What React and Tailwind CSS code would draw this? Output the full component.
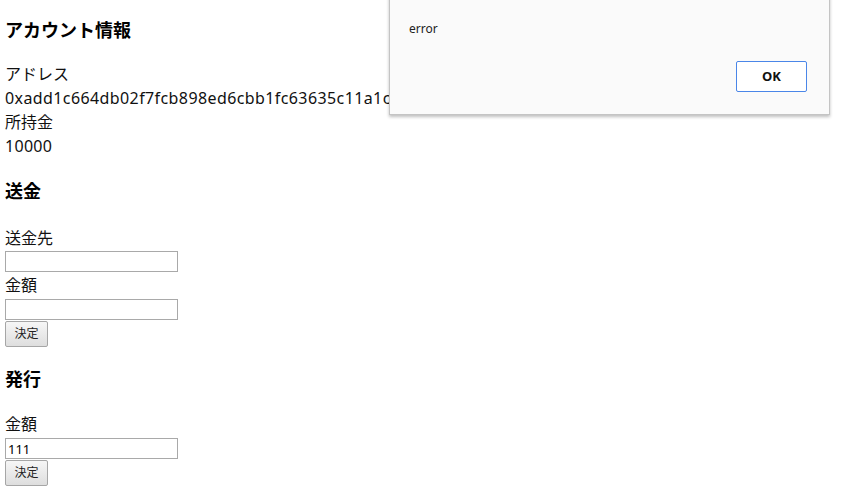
import React from "react";

const font = { fontFamily: '"Noto Sans", "Noto Sans CJK JP", sans-serif' };

function Submit() {
  return (
    <button className="mt-px w-[43px] h-[26px] rounded-[2px] border border-[#a6a6a6] bg-gradient-to-b from-[#f6f6f6] to-[#dedede] text-[12px] text-[#222] leading-none">
      決定
    </button>
  );
}

export default function App() {
  return (
    <div className="relative w-[858px] h-[494px] overflow-hidden bg-white text-[#111]" style={font}>
      <main className="flex flex-col items-start px-[5px] pt-[17px]">
        {/* アカウント情報 */}
        <h3 className="text-[18px] font-bold leading-[26px] text-black">アカウント情報</h3>
        <div className="mt-[19px] text-[16px] leading-[24px]">
          <p>アドレス</p>
          <p className="whitespace-nowrap tracking-[0.4px]">0xadd1c664db02f7fcb898ed6cbb1fc63635c11a1c</p>
          <p>所持金</p>
          <p className="tracking-[0.3px]">10000</p>
        </div>

        {/* 送金 */}
        <h3 className="mt-[20px] text-[18px] font-bold leading-[26px] text-black">送金</h3>
        <div className="mt-[22px] h-[24px] leading-[24px] text-[16px]">送金先</div>
        <input type="text" className="mt-px w-[173px] h-[21px] border border-[#a9a9a9] px-[2px] text-[13px] outline-none bg-white" />
        <div className="mt-px h-[24px] leading-[24px] text-[16px]">金額</div>
        <input type="text" className="mt-[2px] w-[173px] h-[21px] border border-[#a9a9a9] px-[2px] text-[13px] outline-none bg-white" />
        <Submit />

        {/* 発行 */}
        <h3 className="mt-[19px] text-[18px] font-bold leading-[26px] text-black">発行</h3>
        <div className="mt-[20px] h-[24px] leading-[24px] text-[16px]">金額</div>
        <input
          type="text"
          defaultValue="111"
          className="mt-[2px] w-[173px] h-[21px] border border-[#a9a9a9] px-[2px] text-[13px] text-black outline-none bg-white"
        />
        <Submit />
      </main>

      {/* alert dialog */}
      <div className="absolute left-[389px] top-[-20px] w-[441px] h-[135px] border border-[#c4c4c4] bg-[#fafafa] shadow-[0_2px_3px_rgba(0,0,0,0.25)]">
        <div className="absolute left-[176px] top-[2px] text-[14px] font-bold leading-[20px] text-black">の内容</div>
        <p className="absolute left-[19px] top-[39px] text-[12px] leading-[18px] text-[#222]">error</p>
        <button className="absolute left-[346px] top-[80px] w-[71px] h-[31px] rounded-[2px] border border-[#4a86e8] bg-white text-[13px] font-bold text-[#111]">
          OK
        </button>
      </div>
    </div>
  );
}
